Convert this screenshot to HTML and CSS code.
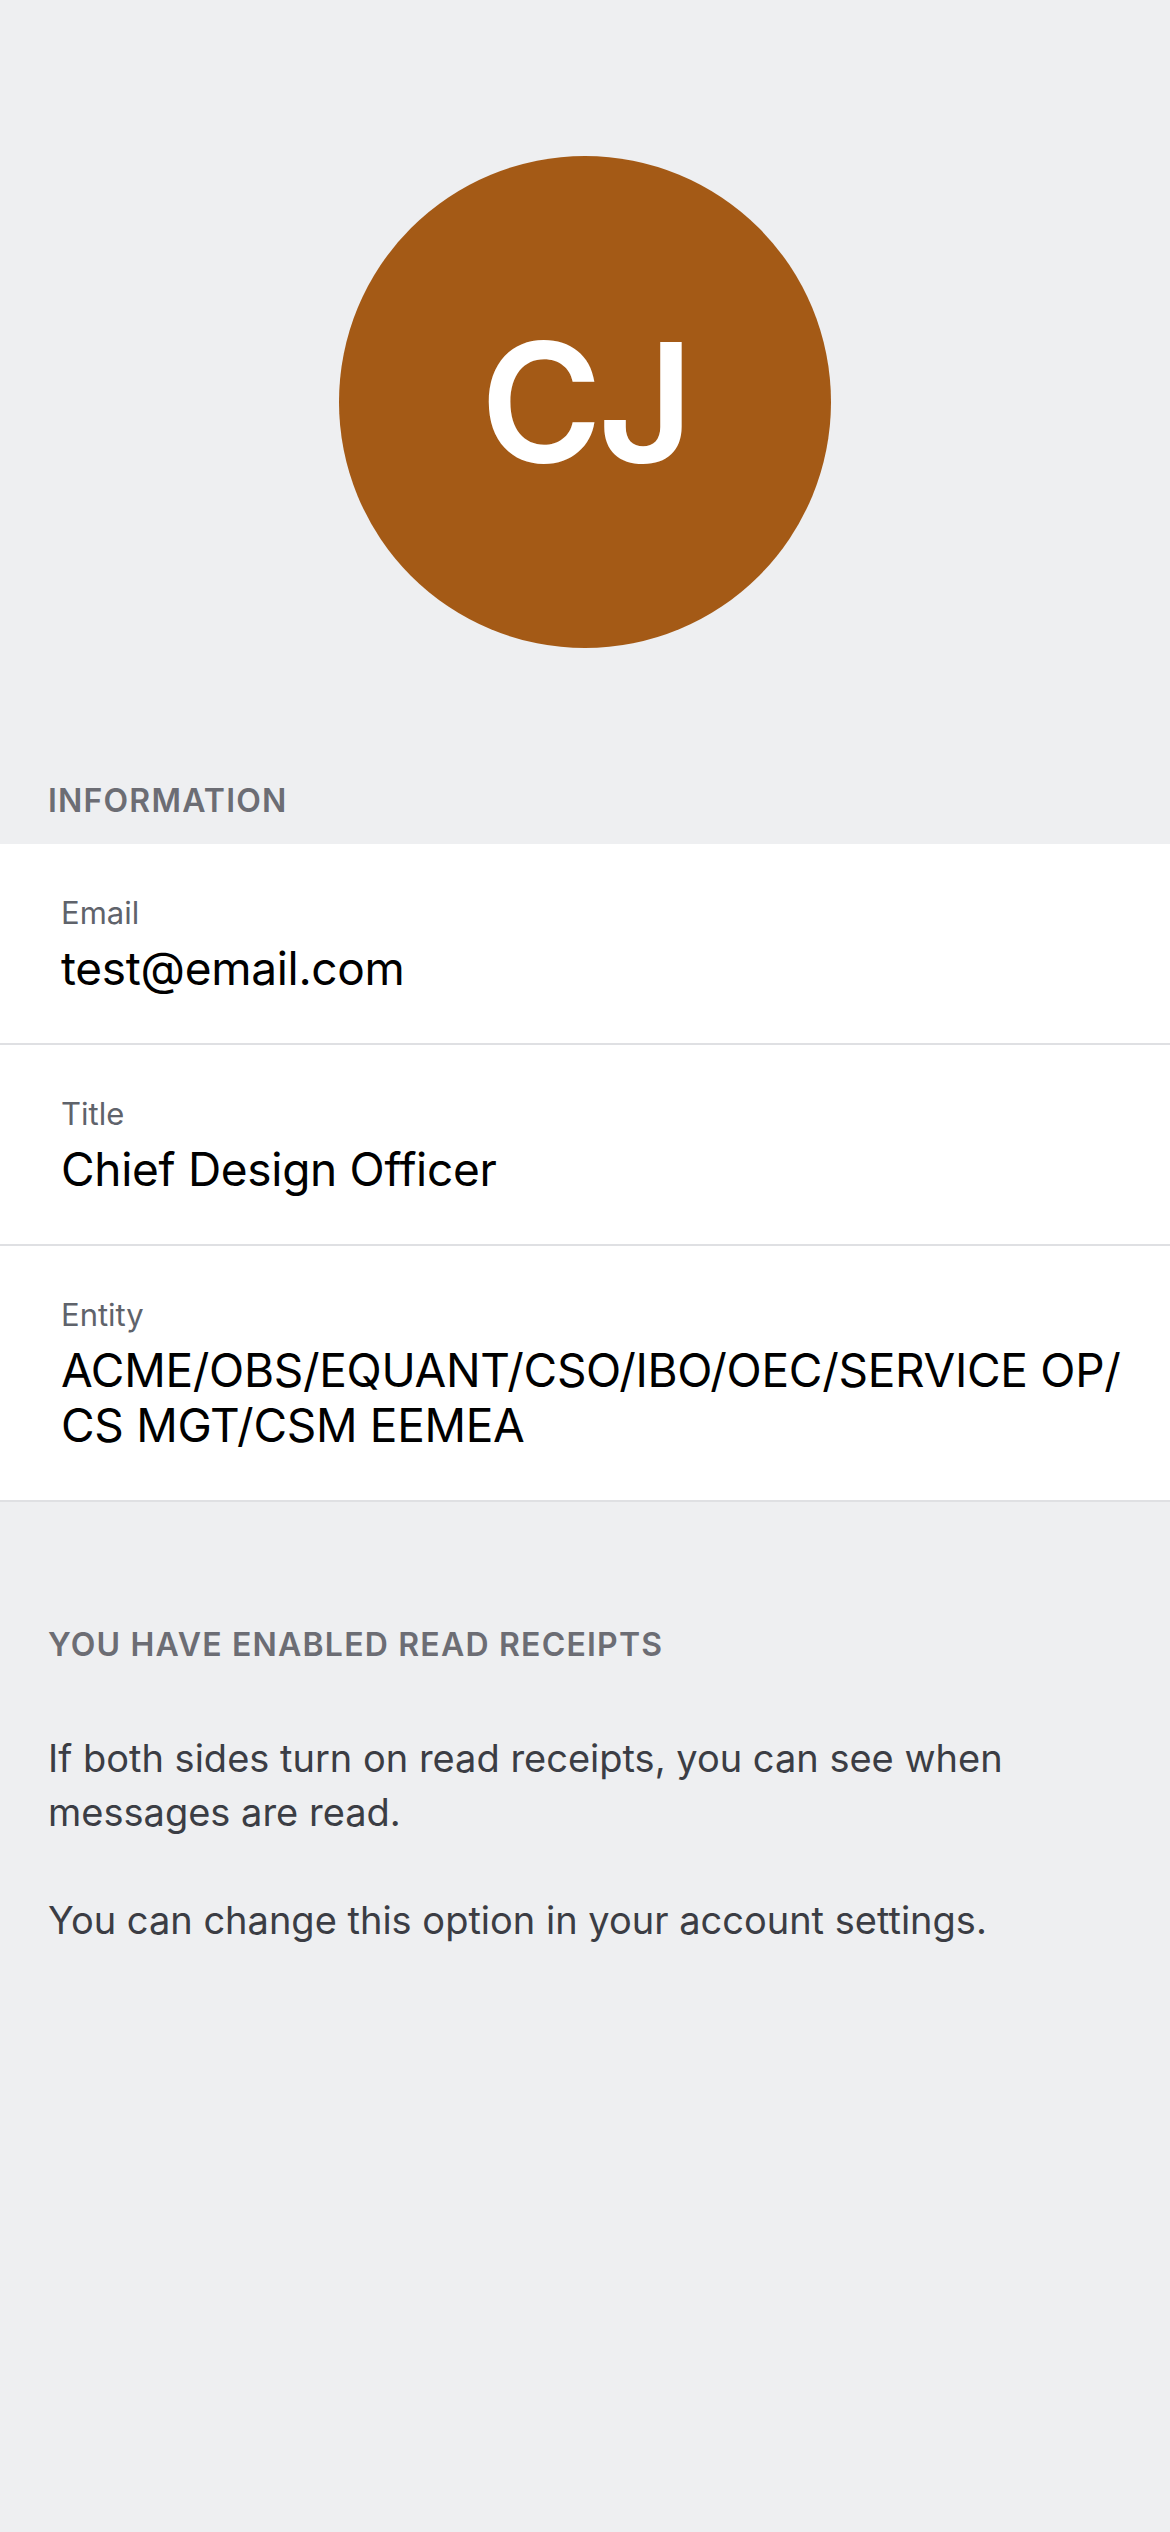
FILE: index.html
```html
<!DOCTYPE html>
<html lang="en">
<head>
<meta charset="utf-8">
<title>Contact</title>
<link rel="stylesheet" href="styles.css">
</head>
<body>
<main class="page">
  <div class="avatar-wrap">
    <div class="avatar">CJ</div>
  </div>

  <h2 class="section-header info-header">INFORMATION</h2>
  <section class="info-list">
    <div class="info-row">
      <div class="info-label">Email</div>
      <div class="info-value">test@email.com</div>
    </div>
    <div class="info-row">
      <div class="info-label">Title</div>
      <div class="info-value">Chief Design Officer</div>
    </div>
    <div class="info-row">
      <div class="info-label">Entity</div>
      <div class="info-value">ACME/OBS/EQUANT/CSO/IBO/OEC/SERVICE&nbsp;OP/<wbr>CS MGT/CSM EEMEA</div>
    </div>
  </section>

  <h2 class="section-header receipts-header">YOU HAVE ENABLED READ RECEIPTS</h2>
  <div class="receipts-text">
    <p>If both sides turn on read receipts, you can see when messages are read.</p>
    <p>You can change this option in your account settings.</p>
  </div>
</main>
</body>
</html>
```

FILE: styles.css
```css
html, body {
  margin: 0;
  padding: 0;
}
body {
  background: #eeeff1;
  font-family: Inter, "Noto Sans", sans-serif;
  width: 1170px;
  min-height: 2532px;
}
.page {
  display: flex;
  flex-direction: column;
}
.avatar-wrap {
  display: flex;
  justify-content: center;
  padding-top: 156px;
}
.avatar {
  width: 492px;
  height: 492px;
  border-radius: 50%;
  background: #a45a16;
  color: #ffffff;
  display: flex;
  align-items: center;
  justify-content: center;
  font-size: 165px;
  font-weight: 600;
  letter-spacing: -4px;
}
.section-header {
  margin: 0;
  padding: 0 48px;
  font-size: 32px;
  line-height: 40px;
  font-weight: 600;
  color: #6c6d74;
  letter-spacing: 1.2px;
}
.info-header {
  margin-top: 133px;
  margin-bottom: 23px;
}
.info-list {
  background: #ffffff;
  display: flex;
  flex-direction: column;
}
.info-row {
  padding: 47px 36px 47px 61px;
  border-bottom: 2px solid #dfe0e3;
  display: flex;
  flex-direction: column;
  gap: 6px;
}
.info-label {
  font-size: 31px;
  line-height: 44px;
  color: #5f636b;
}
.info-value {
  font-size: 46px;
  line-height: 55px;
  color: #000000;
  letter-spacing: -0.3px;
}
.receipts-header {
  margin-top: 123px;
}
.receipts-text {
  padding: 66px 48px 0;
  color: #3b3d44;
  font-size: 38px;
  line-height: 54px;
}
.receipts-text p {
  margin: 0 0 54px;
}
```
